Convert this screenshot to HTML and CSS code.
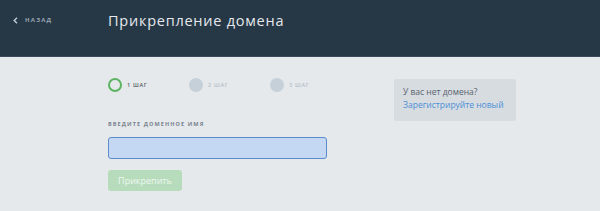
FILE: index.html
```html
<!DOCTYPE html>
<html lang="ru">
<head>
<meta charset="utf-8">
<link rel="stylesheet" href="styles.css">
</head>
<body>
<header class="topbar">
  <a class="back" href="#"><svg class="back-icon" width="5" height="7" viewBox="0 0 5 7"><path d="M4 0.8 L1.2 3.5 L4 6.2" fill="none" stroke="#c3ccd4" stroke-width="1.4"/></svg><span>НАЗАД</span></a>
  <h1 class="title">Прикрепление домена</h1>
</header>
<main class="content">
  <section class="form">
    <div class="steps">
      <div class="step active"><span class="dot"></span><span class="step-label">1 ШАГ</span></div>
      <div class="step"><span class="dot"></span><span class="step-label">2 ШАГ</span></div>
      <div class="step"><span class="dot"></span><span class="step-label">3 ШАГ</span></div>
    </div>
    <label class="field-label">ВВЕДИТЕ ДОМЕННОЕ ИМЯ</label>
    <input class="field" type="text">
    <button class="submit">Прикрепить</button>
  </section>
  <aside class="side">
    <p class="side-q">У вас нет домена?</p>
    <a class="side-link" href="#">Зарегистрируйте новый</a>
  </aside>
</main>
</body>
</html>
```
FILE: styles.css
```css
* { box-sizing: border-box; }
html, body { margin: 0; padding: 0; }
body {
  background: #e6e9ec;
  font-family: "Open Sans", "Liberation Sans", sans-serif;
  width: 600px;
  height: 211px;
  overflow: hidden;
}
.topbar {
  height: 57px;
  background: #263746;
  border-bottom: 1px solid #3a4a58;
  display: flex;
  align-items: center;
  padding-left: 13px;
  padding-bottom: 16px;
}
.back {
  display: flex;
  align-items: center;
  gap: 7px;
  width: 95px;
  text-decoration: none;
  color: #9aa6b1;
  font-size: 6px;
  font-weight: 700;
  letter-spacing: 1.2px;
}
.title {
  margin: 0;
  color: #e4e8ec;
  font-size: 14.5px;
  font-weight: 400;
  letter-spacing: 0.75px;
}
.content {
  display: flex;
  padding-left: 108px;
  padding-top: 21px;
}
.form {
  width: 286px;
  display: flex;
  flex-direction: column;
}
.steps {
  display: flex;
  height: 14px;
  align-items: center;
}
.step {
  display: flex;
  align-items: center;
  gap: 5px;
  width: 81px;
}
.dot {
  width: 14px;
  height: 14px;
  border-radius: 50%;
  background: #c5d0d9;
}
.step.active .dot {
  background: transparent;
  border: 2px solid #5cb463;
}
.step-label {
  font-size: 5.5px;
  letter-spacing: 0.7px;
  color: #b4bec7;
  font-weight: 600;
}
.step.active .step-label { color: #4f5a64; }
.field-label {
  margin-top: 28px;
  font-size: 5.5px;
  font-weight: 700;
  letter-spacing: 1.1px;
  color: #77838e;
}
.field {
  margin-top: 9px;
  width: 219px;
  height: 22px;
  border: 1px solid #5a8ccc;
  border-radius: 3px;
  background: #c4d8f3;
  outline: none;
}
.submit {
  margin-top: 11px;
  width: 74px;
  height: 21px;
  border: none;
  border-radius: 3px;
  background: #b7dcbc;
  color: #eef7ef;
  font-family: "Open Sans", "Liberation Sans", sans-serif;
  font-size: 9px;
  padding: 0;
}
.side {
  margin-top: 1px;
  width: 122px;
  height: 42px;
  background: #d7dce1;
  border-radius: 2px;
  padding: 7px 9px;
  display: flex;
  flex-direction: column;
  gap: 2px;
}
.side-q {
  margin: 0;
  font-size: 8.5px;
  color: #58636d;
}
.side-link {
  font-size: 8.5px;
  color: #4a8fd6;
  text-decoration: none;
}
```
